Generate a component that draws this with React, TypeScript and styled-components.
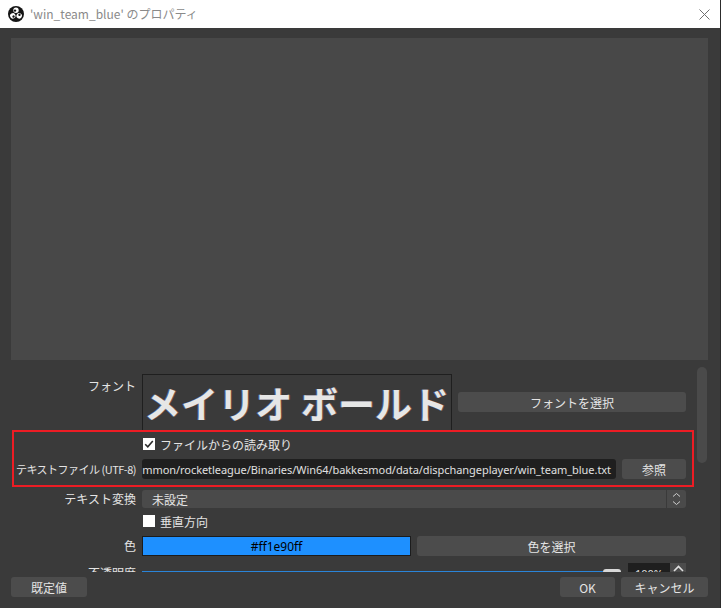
import styled, { createGlobalStyle } from "styled-components";

const GlobalStyle = createGlobalStyle`
  html, body {
    margin: 0;
    padding: 0;
    background: #3a3a3a;
  }
  body {
    font-family: "Noto Sans CJK JP", "Noto Sans", sans-serif;
    font-size: 12px;
    color: #e2e2e2;
  }
  * {
    box-sizing: border-box;
  }
`;

function ObsLogo() {
  const blobs = [0, 120, 240];
  return (
    <svg width="16" height="16" viewBox="0 0 16 16">
      <circle cx="8" cy="8" r="8" fill="#151515" />
      {blobs.map((deg) => (
        <g key={deg} transform={`rotate(${deg} 8 8)`}>
          <circle cx="8" cy="4.3" r="2.7" fill="#fff" />
          <circle cx="7" cy="4.6" r="1.2" fill="#151515" />
        </g>
      ))}
    </svg>
  );
}

function Check({ checked }: { checked: boolean }) {
  return (
    <CheckBox>
      {checked && (
        <svg width="12" height="12" viewBox="0 0 12 12">
          <path d="M2.2 6.2 L4.8 8.8 L9.8 3" fill="none" stroke="#2a2a2a" strokeWidth="1.6" />
        </svg>
      )}
    </CheckBox>
  );
}

export default function App() {
  return (
    <>
      <GlobalStyle />
      <Window>
        <TitleBar>
          <ObsLogo />
          <TitleText>'win_team_blue' のプロパティ</TitleText>
          <CloseButton>
            <svg width="11" height="11" viewBox="0 0 11 11">
              <path d="M0.5 0.5 L10.5 10.5 M10.5 0.5 L0.5 10.5" stroke="#6f6f6f" strokeWidth="1" />
            </svg>
          </CloseButton>
        </TitleBar>

        <Body>
          <Preview />

          <ScrollArea>
            <Form>
              <Row $top={14} $align="start">
                <Label $pad={2}>フォント</Label>
                <Field>
                  <FontBox>メイリオ ボールド</FontBox>
                  <Button $width={228}>フォントを選択</Button>
                </Field>
              </Row>

              <Highlight>
                <Row>
                  <span />
                  <Field>
                    <Check checked />
                    <CheckLabel>ファイルからの読み取り</CheckLabel>
                  </Field>
                </Row>
                <Row>
                  <Label $tight>テキストファイル (UTF-8)</Label>
                  <Field>
                    <PathInput>
                      <span>mmon/rocketleague/Binaries/Win64/bakkesmod/data/dispchangeplayer/win_team_blue.txt</span>
                    </PathInput>
                    <Button $width={64}>参照</Button>
                  </Field>
                </Row>
              </Highlight>

              <Row $top={2} $height={18}>
                <Label>テキスト変換</Label>
                <Combo>
                  <ComboText>未設定</ComboText>
                  <ComboArrows>
                    <svg width="9" height="14" viewBox="0 0 9 14">
                      <path d="M1 4.5 L4.5 1.5 L8 4.5 M1 9.5 L4.5 12.5 L8 9.5" fill="none" stroke="#cfcfcf" strokeWidth="1" />
                    </svg>
                  </ComboArrows>
                </Combo>
              </Row>

              <Row $top={2}>
                <span />
                <Field>
                  <Check checked={false} />
                  <CheckLabel>垂直方向</CheckLabel>
                </Field>
              </Row>

              <Row $top={5}>
                <Label>色</Label>
                <Field>
                  <Swatch $color="#1e90ff">#ff1e90ff</Swatch>
                  <Button $width={269}>色を選択</Button>
                </Field>
              </Row>

              <Row $top={7}>
                <Label>不透明度</Label>
                <Field>
                  <Slider>
                    <SliderTrack />
                    <SliderHandle />
                  </Slider>
                  <SpinBox>100%</SpinBox>
                  <SpinButton>
                    <svg width="11" height="7" viewBox="0 0 11 7">
                      <path d="M1 6 L5.5 1.5 L10 6" fill="none" stroke="#e0e0e0" strokeWidth="1.6" />
                    </svg>
                  </SpinButton>
                </Field>
              </Row>
            </Form>

            <ScrollTrack>
              <ScrollThumb />
            </ScrollTrack>
          </ScrollArea>

          <ButtonBar>
            <Button $width={76}>既定値</Button>
            <Spacer />
            <Button $width={55}>OK</Button>
            <Button $width={87}>キャンセル</Button>
          </ButtonBar>
        </Body>
      </Window>
    </>
  );
}

const Window = styled.div`
  width: 721px;
  height: 608px;
  display: flex;
  flex-direction: column;
  background: #3a3a3a;
  border-right: 1px solid #2c2c2c;
  overflow: hidden;
`;

const TitleBar = styled.div`
  height: 28px;
  flex-shrink: 0;
  background: #ffffff;
  display: flex;
  align-items: center;
  padding-left: 8px;
`;

const TitleText = styled.span`
  margin-left: 6px;
  color: #8a8a8a;
  font-size: 12px;
  line-height: 1;
`;

const CloseButton = styled.div`
  margin-left: auto;
  width: 32px;
  height: 28px;
  display: flex;
  align-items: center;
  justify-content: center;
`;

const Body = styled.div`
  flex: 1;
  display: flex;
  flex-direction: column;
  padding-top: 10px;
`;

const Preview = styled.div`
  height: 322px;
  margin: 0 12px 0 11px;
  background: #484848;
`;

const ScrollArea = styled.div`
  height: 212px;
  display: flex;
  overflow: hidden;
`;

const Form = styled.div`
  width: 686px;
  padding-left: 11px;
  display: flex;
  flex-direction: column;
`;

const Row = styled.div<{ $top?: number; $height?: number; $align?: string }>`
  display: grid;
  grid-template-columns: minmax(0, 1fr) 544px;
  column-gap: 6px;
  align-items: ${(p) => p.$align || "center"};
  margin-top: ${(p) => p.$top || 0}px;
  min-height: ${(p) => p.$height || 20}px;
  flex-shrink: 0;
`;

const Label = styled.div<{ $pad?: number; $tight?: boolean }>`
  display: flex;
  justify-content: flex-end;
  white-space: nowrap;
  font-size: ${(p) => (p.$tight ? 11 : 12)}px;
  line-height: 20px;
  color: #e4e4e4;
  letter-spacing: ${(p) => (p.$tight ? "-0.5px" : "0")};
  margin-top: ${(p) => p.$pad || 0}px;
`;

const Field = styled.div`
  display: flex;
  align-items: center;
  gap: 6px;
  min-width: 0;
`;

const Button = styled.div<{ $width: number }>`
  width: ${(p) => p.$width}px;
  height: 20px;
  flex-shrink: 0;
  background: #4c4c4c;
  border-radius: 3px;
  color: #e4e4e4;
  font-size: 12px;
  display: flex;
  align-items: center;
  justify-content: center;
`;

const FontBox = styled.div`
  width: 310px;
  height: 56px;
  flex-shrink: 0;
  border: 1px solid #1f1f1f;
  border-bottom: none;
  display: flex;
  align-items: center;
  padding-left: 1px;
  font-size: 37px;
  font-weight: 700;
  color: #e6e6e6;
  white-space: nowrap;
  overflow: hidden;
  letter-spacing: 0.1px;
  text-shadow: -1px 0 0 rgba(90, 150, 255, 0.45), 1px 0 0 rgba(255, 130, 90, 0.35);
`;

const Highlight = styled.div`
  margin: 0 -8px 0 1px;
  border: 2px solid #ed1c24;
  padding: 2px 6px 6px 0;
  display: flex;
  flex-direction: column;
  gap: 5px;
  flex-shrink: 0;
`;

const CheckBox = styled.div`
  width: 12px;
  height: 12px;
  margin-left: 1px;
  background: #ffffff;
  display: flex;
  align-items: center;
  justify-content: center;
  flex-shrink: 0;
`;

const CheckLabel = styled.span`
  margin-left: -1px;
  font-size: 12px;
  color: #e4e4e4;
`;

const PathInput = styled.div`
  width: 474px;
  height: 20px;
  flex-shrink: 0;
  background: #1f1f1f;
  border-radius: 3px;
  padding: 0 5px;
  display: flex;
  align-items: center;
  justify-content: flex-end;
  overflow: hidden;
  white-space: nowrap;
  font-family: "Noto Sans", sans-serif;
  font-size: 11px;
  letter-spacing: -0.05px;
  color: #e0e0e0;
`;

const Combo = styled.div`
  height: 18px;
  background: #4a4a4a;
  border-radius: 3px;
  display: flex;
  align-items: center;
`;

const ComboText = styled.span`
  flex: 1;
  padding-left: 10px;
  font-size: 12px;
  color: #e4e4e4;
`;

const ComboArrows = styled.div`
  width: 20px;
  height: 18px;
  border-left: 1px solid #3a3a3a;
  display: flex;
  align-items: center;
  justify-content: center;
`;

const Swatch = styled.div<{ $color: string }>`
  width: 269px;
  height: 20px;
  flex-shrink: 0;
  background: ${(p) => p.$color};
  border: 1px solid #1c1c1c;
  color: #000;
  font-family: "Noto Sans", sans-serif;
  font-size: 12px;
  display: flex;
  align-items: center;
  justify-content: center;
`;

const Slider = styled.div`
  width: 479px;
  height: 20px;
  flex-shrink: 0;
  display: flex;
  align-items: center;
`;

const SliderTrack = styled.div`
  flex: 1;
  height: 2px;
  margin-bottom: 3px;
  background: #2a84d8;
`;

const SliderHandle = styled.div`
  width: 18px;
  height: 8px;
  background: #d8d8d8;
  border-radius: 3px;
`;

const SpinBox = styled.div`
  width: 42px;
  height: 20px;
  margin-left: 1px;
  background: #1f1f1f;
  font-size: 11px;
  font-family: "Noto Sans", sans-serif;
  color: #e0e0e0;
  display: flex;
  align-items: center;
  justify-content: center;
`;

const SpinButton = styled.div`
  width: 16px;
  height: 10px;
  margin-left: -6px;
  align-self: flex-start;
  background: #4c4c4c;
  display: flex;
  align-items: center;
  justify-content: center;
`;

const ScrollTrack = styled.div`
  margin-left: 11px;
  width: 10px;
  padding-top: 7px;
`;

const ScrollThumb = styled.div`
  height: 96px;
  border-radius: 5px;
  background: #4a4a4a;
`;

const ButtonBar = styled.div`
  margin-top: 5px;
  padding: 0 12px 0 11px;
  display: flex;
  gap: 6px;
`;

const Spacer = styled.div`
  flex: 1;
`;
